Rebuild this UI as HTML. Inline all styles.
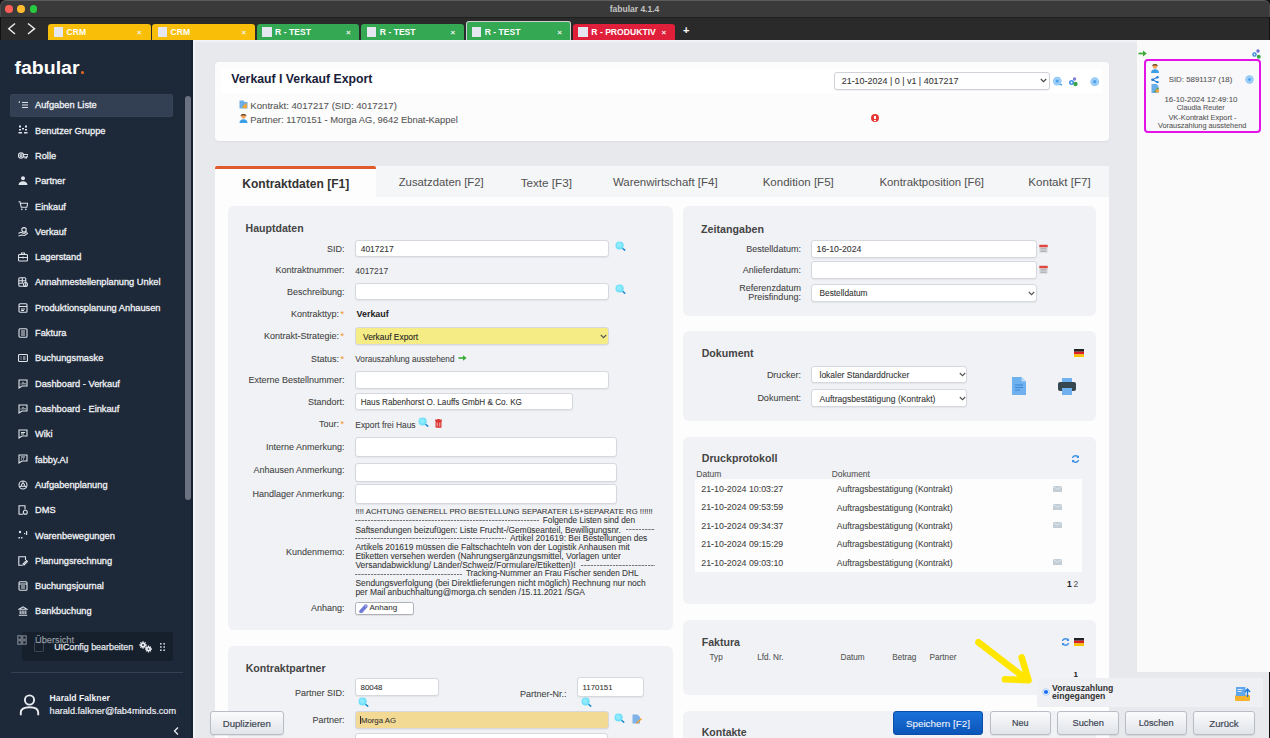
<!DOCTYPE html>
<html><head><meta charset="utf-8">
<style>
*{box-sizing:border-box;margin:0;padding:0}
body{width:1270px;height:738px;overflow:hidden;position:relative;background:#e8e9ed;font-family:"Liberation Sans",sans-serif}
.a{position:absolute}
.t{position:absolute;line-height:1;white-space:pre}
.inp{position:absolute;background:#fff;border:1px solid #d6d8de;border-radius:3px;box-shadow:0 1px 1px rgba(0,0,0,0.05)}
.panel{position:absolute;background:#f1f2f6;border-radius:6px}
.btn{position:absolute;border:1px solid #b9bdc6;border-radius:3px;background:linear-gradient(#fbfbfc,#e2e4e9)}
</style></head><body>
<div class="a" style="left:0px;top:0px;width:1270.00px;height:40.00px;background:#111"></div>
<div class="a" style="left:0px;top:0px;width:1270.00px;height:17.00px;background:#3a3a3a;border-radius:6px 6px 0 0;border-top:1px solid #5c5c5c;border-left:1px solid #4a4a4a;border-right:1px solid #4a4a4a"></div>
<div class="a" style="left:0px;top:17px;width:1270.00px;height:1.00px;background:#1f1f1f"></div>
<div class="a" style="left:0px;top:18px;width:1270.00px;height:22.00px;background:#2a2a2a"></div>
<div class="a" style="left:0px;top:17px;width:1.00px;height:721.00px;background:#111"></div>
<div class="a" style="left:1269px;top:17px;width:1.00px;height:721.00px;background:#111"></div>
<div class="a" style="left:5px;top:5px;width:7.6px;height:7.6px;border-radius:50%;background:#fe5f57"></div>
<div class="a" style="left:17px;top:5px;width:7.6px;height:7.6px;border-radius:50%;background:#febc2e"></div>
<div class="a" style="left:29.5px;top:5px;width:7.6px;height:7.6px;border-radius:50%;background:#28c840"></div>
<div class="t" style="left:609.70px;top:5.11px;font-size:8.50px;color:#c4c4c4;font-weight:bold;">fabular 4.1.4</div>
<svg class="a" style="left:0;top:17px" width="40" height="23" viewBox="0 0 40 23"><path d="M15 6.5L8.8 11.7l6.2 5.3M28 6.5l6.5 5.2-6.5 5.3" stroke="#ececec" stroke-width="1.5" fill="none"/></svg>
<div class="a" style="left:48px;top:23.5px;width:102.50px;height:16.50px;background:#f8be08;border-radius:3px 3px 0 0;"></div>
<div class="a" style="left:53.5px;top:27.3px;width:9.50px;height:9.50px;background:#e4e7ef"></div>
<div class="t" style="left:66.50px;top:28.02px;font-size:8.60px;color:#fff;font-weight:bold;">CRM</div>
<div class="t" style="left:137.00px;top:29.33px;font-size:8.00px;color:#f4f4f4;font-weight:bold;">×</div>
<div class="a" style="left:152px;top:23.5px;width:103.00px;height:16.50px;background:#f8be08;border-radius:3px 3px 0 0;"></div>
<div class="a" style="left:157.5px;top:27.3px;width:9.50px;height:9.50px;background:#e4e7ef"></div>
<div class="t" style="left:170.50px;top:28.02px;font-size:8.60px;color:#fff;font-weight:bold;">CRM</div>
<div class="t" style="left:241.50px;top:29.33px;font-size:8.00px;color:#f4f4f4;font-weight:bold;">×</div>
<div class="a" style="left:256.6px;top:23.5px;width:102.90px;height:16.50px;background:#34a853;border-radius:3px 3px 0 0;"></div>
<div class="a" style="left:262.1px;top:27.3px;width:9.50px;height:9.50px;background:#e4e7ef"></div>
<div class="t" style="left:275.10px;top:28.02px;font-size:8.60px;color:#fff;font-weight:bold;">R - TEST</div>
<div class="t" style="left:346.00px;top:29.33px;font-size:8.00px;color:#f4f4f4;font-weight:bold;">×</div>
<div class="a" style="left:361.3px;top:23.5px;width:102.70px;height:16.50px;background:#34a853;border-radius:3px 3px 0 0;"></div>
<div class="a" style="left:366.8px;top:27.3px;width:9.50px;height:9.50px;background:#e4e7ef"></div>
<div class="t" style="left:379.80px;top:28.02px;font-size:8.60px;color:#fff;font-weight:bold;">R - TEST</div>
<div class="t" style="left:450.50px;top:29.33px;font-size:8.00px;color:#f4f4f4;font-weight:bold;">×</div>
<div class="a" style="left:466.2px;top:21px;width:104.60px;height:19.00px;background:#34a853;border-radius:3px 3px 0 0;border:1.5px solid #d0d0d0;border-bottom:none;"></div>
<div class="a" style="left:471.7px;top:27.3px;width:9.50px;height:9.50px;background:#e4e7ef"></div>
<div class="t" style="left:484.70px;top:28.02px;font-size:8.60px;color:#fff;font-weight:bold;">R - TEST</div>
<div class="t" style="left:557.30px;top:29.33px;font-size:8.00px;color:#f4f4f4;font-weight:bold;">×</div>
<div class="a" style="left:572.8px;top:23.5px;width:102.20px;height:16.50px;background:#e0203a;border-radius:3px 3px 0 0;"></div>
<div class="a" style="left:578.3px;top:27.3px;width:9.50px;height:9.50px;background:#e4e7ef"></div>
<div class="t" style="left:591.30px;top:28.02px;font-size:8.60px;color:#fff;font-weight:bold;">R - PRODUKTIV</div>
<div class="t" style="left:661.50px;top:29.33px;font-size:8.00px;color:#f4f4f4;font-weight:bold;">×</div>
<div class="t" style="left:683.00px;top:25.19px;font-size:11.00px;color:#fff;font-weight:bold;">+</div>
<div class="a" style="left:0px;top:40px;width:193.00px;height:698.00px;background:#1d2838"></div>
<div class="t" style="left:14.50px;top:57.90px;font-size:19.50px;color:#fff;font-weight:bold;transform:scaleY(0.96);transform-origin:0 80%">fabular</div>
<div class="a" style="left:80.5px;top:71px;width:3.00px;height:3.20px;background:#f26522;border-radius:50%"></div>
<div class="a" style="left:10px;top:94px;width:163.00px;height:22.70px;background:#333f53;border-radius:3px;box-shadow:inset 0 0 0 0.5px #3b475a"></div>
<div class="a" style="left:185px;top:96px;width:6.00px;height:404.00px;background:#6b7280;border-radius:3px"></div>
<div class="a" style="left:191px;top:40px;width:2.00px;height:698.00px;background:#172030"></div>
<div class="a" style="left:193px;top:40px;width:2.00px;height:698.00px;background:#f2f3f6"></div>
<div class="t" style="left:35.00px;top:101.27px;font-size:9.25px;color:#f0f2f5;-webkit-text-stroke:0.3px #f0f2f5">Aufgaben Liste</div>
<svg class="a" style="left:18px;top:100.1px" width="10" height="10" viewBox="0 0 10 10"><path d="M4 2.5h6M4 5h6M4 7.5h6" stroke="#dfe3ea" stroke-width="1.1" fill="none"/><path d="M0.8 2.5l1-1" stroke="#dfe3ea" stroke-width="1.1" fill="none"/></svg>
<div class="t" style="left:35.00px;top:126.58px;font-size:9.25px;color:#f0f2f5;-webkit-text-stroke:0.3px #f0f2f5">Benutzer Gruppe</div>
<svg class="a" style="left:18px;top:125.4px" width="10" height="10" viewBox="0 0 10 10"><g fill="#dfe3ea"><rect x="1" y="0.5" width="2" height="2"/><rect x="7" y="0.5" width="2" height="2"/><rect x="1" y="4" width="2" height="1.5"/><rect x="7" y="4" width="2" height="1.5"/><rect x="4" y="3" width="2" height="1.5"/><rect x="0.5" y="7" width="3.5" height="1.5"/><rect x="6" y="7" width="3.5" height="1.5"/></g></svg>
<div class="t" style="left:35.00px;top:151.89px;font-size:9.25px;color:#f0f2f5;-webkit-text-stroke:0.3px #f0f2f5">Rolle</div>
<svg class="a" style="left:18px;top:150.7px" width="10" height="10" viewBox="0 0 10 10"><circle cx="3" cy="4.5" r="2.6" stroke="#dfe3ea" stroke-width="1.1" fill="none"/><circle cx="3" cy="4.5" r="1" stroke="#dfe3ea" stroke-width="1.1" fill="none"/><path d="M5.6 3.5h4.4v2.2h-1.5v1.3h-1.5v-1.3h-1.4" stroke="#dfe3ea" stroke-width="1.1" fill="none"/></svg>
<div class="t" style="left:35.00px;top:177.20px;font-size:9.25px;color:#f0f2f5;-webkit-text-stroke:0.3px #f0f2f5">Partner</div>
<svg class="a" style="left:18px;top:176.0px" width="10" height="10" viewBox="0 0 10 10"><g fill="#dfe3ea"><circle cx="5" cy="2.3" r="2"/><path d="M0.5 9c0-2.5 2-3.8 4.5-3.8s4.5 1.3 4.5 3.8z"/></g></svg>
<div class="t" style="left:35.00px;top:202.51px;font-size:9.25px;color:#f0f2f5;-webkit-text-stroke:0.3px #f0f2f5">Einkauf</div>
<svg class="a" style="left:18px;top:201.3px" width="10" height="10" viewBox="0 0 10 10"><path d="M0.5 0.8h1.5l1.3 5.5h5.5l1-4h-7" stroke="#dfe3ea" stroke-width="1.1" fill="none"/><circle cx="3.8" cy="8.4" r="0.8" fill="#dfe3ea"/><circle cx="7.8" cy="8.4" r="0.8" fill="#dfe3ea"/></svg>
<div class="t" style="left:35.00px;top:227.82px;font-size:9.25px;color:#f0f2f5;-webkit-text-stroke:0.3px #f0f2f5">Verkauf</div>
<svg class="a" style="left:18px;top:226.6px" width="10" height="10" viewBox="0 0 10 10"><circle cx="6" cy="2.8" r="2.2" stroke="#dfe3ea" stroke-width="1.1" fill="none"/><path d="M0.5 6.5l2-1.2 3.5 1 3-1.5M0.5 9l3-1 3 .5 3.5-2.5" stroke="#dfe3ea" stroke-width="1.1" fill="none"/></svg>
<div class="t" style="left:35.00px;top:253.13px;font-size:9.25px;color:#f0f2f5;-webkit-text-stroke:0.3px #f0f2f5">Lagerstand</div>
<svg class="a" style="left:18px;top:252.0px" width="10" height="10" viewBox="0 0 10 10"><rect x="0.5" y="2.5" width="9" height="6.5" rx="1" stroke="#dfe3ea" stroke-width="1.1" fill="none"/><path d="M3.5 2.5v-1.5h3v1.5M0.5 5.5h9M5 4.5v2" stroke="#dfe3ea" stroke-width="1.1" fill="none"/></svg>
<div class="t" style="left:35.00px;top:278.44px;font-size:9.25px;color:#f0f2f5;-webkit-text-stroke:0.3px #f0f2f5">Annahmestellenplanung Unkel</div>
<svg class="a" style="left:18px;top:277.3px" width="10" height="10" viewBox="0 0 10 10"><rect x="0.8" y="0.8" width="7" height="8.4" rx="1" stroke="#dfe3ea" stroke-width="1.1" fill="none"/><path d="M0.8 3.8h7M0.8 6.3h4M4.3 .8v5.5" stroke="#dfe3ea" stroke-width="1.1" fill="none"/><circle cx="7.5" cy="7.5" r="2" stroke="#dfe3ea" stroke-width="1.1" fill="none"/></svg>
<div class="t" style="left:35.00px;top:303.75px;font-size:9.25px;color:#f0f2f5;-webkit-text-stroke:0.3px #f0f2f5">Produktionsplanung Anhausen</div>
<svg class="a" style="left:18px;top:302.6px" width="10" height="10" viewBox="0 0 10 10"><rect x="1" y="0.8" width="8" height="8.4" rx="1" stroke="#dfe3ea" stroke-width="1.1" fill="none"/><path d="M1 3.5h8M3 6h4M3 7.5h3" stroke="#dfe3ea" stroke-width="1.1" fill="none"/></svg>
<div class="t" style="left:35.00px;top:329.06px;font-size:9.25px;color:#f0f2f5;-webkit-text-stroke:0.3px #f0f2f5">Faktura</div>
<svg class="a" style="left:18px;top:327.9px" width="10" height="10" viewBox="0 0 10 10"><rect x="1" y="0.8" width="8" height="8.4" rx="1" stroke="#dfe3ea" stroke-width="1.1" fill="none"/><path d="M3 3h4M3 5h4M3 7h4" stroke="#dfe3ea" stroke-width="1.1" fill="none"/></svg>
<div class="t" style="left:35.00px;top:354.37px;font-size:9.25px;color:#f0f2f5;-webkit-text-stroke:0.3px #f0f2f5">Buchungsmaske</div>
<svg class="a" style="left:18px;top:353.2px" width="10" height="10" viewBox="0 0 10 10"><rect x="0.5" y="1.5" width="9" height="7" rx="1" stroke="#dfe3ea" stroke-width="1.1" fill="none"/><path d="M2.5 4h1M2.5 6h1M5 4h2.5M5 6h2.5" stroke="#dfe3ea" stroke-width="1.1" fill="none"/></svg>
<div class="t" style="left:35.00px;top:379.68px;font-size:9.25px;color:#f0f2f5;-webkit-text-stroke:0.3px #f0f2f5">Dashboard - Verkauf</div>
<svg class="a" style="left:18px;top:378.5px" width="10" height="10" viewBox="0 0 10 10"><path d="M1 1h8v6h-5l-3 2z" stroke="#dfe3ea" stroke-width="1.1" fill="none"/><path d="M3 5.5v-1M5 5.5v-2.5M7 5.5v-1.5" stroke="#dfe3ea" stroke-width="1.1" fill="none"/></svg>
<div class="t" style="left:35.00px;top:404.99px;font-size:9.25px;color:#f0f2f5;-webkit-text-stroke:0.3px #f0f2f5">Dashboard - Einkauf</div>
<svg class="a" style="left:18px;top:403.8px" width="10" height="10" viewBox="0 0 10 10"><path d="M1 1h8v6h-5l-3 2z" stroke="#dfe3ea" stroke-width="1.1" fill="none"/><path d="M3 5.5v-1M5 5.5v-2.5M7 5.5v-1.5" stroke="#dfe3ea" stroke-width="1.1" fill="none"/></svg>
<div class="t" style="left:35.00px;top:430.30px;font-size:9.25px;color:#f0f2f5;-webkit-text-stroke:0.3px #f0f2f5">Wiki</div>
<svg class="a" style="left:18px;top:429.1px" width="10" height="10" viewBox="0 0 10 10"><path d="M1 1h8v6h-5l-3 2z" stroke="#dfe3ea" stroke-width="1.1" fill="none"/><path d="M3 3.5h4M3 5h3" stroke="#dfe3ea" stroke-width="1.1" fill="none"/></svg>
<div class="t" style="left:35.00px;top:455.61px;font-size:9.25px;color:#f0f2f5;-webkit-text-stroke:0.3px #f0f2f5">fabby.AI</div>
<svg class="a" style="left:18px;top:454.4px" width="10" height="10" viewBox="0 0 10 10"><path d="M1 1h8v6h-5l-3 2z" stroke="#dfe3ea" stroke-width="1.1" fill="none"/><path d="M3 5h1M5 5h1M3 3h4" stroke="#dfe3ea" stroke-width="1.1" fill="none"/></svg>
<div class="t" style="left:35.00px;top:480.92px;font-size:9.25px;color:#f0f2f5;-webkit-text-stroke:0.3px #f0f2f5">Aufgabenplanung</div>
<svg class="a" style="left:18px;top:479.8px" width="10" height="10" viewBox="0 0 10 10"><circle cx="5" cy="5" r="4" stroke="#dfe3ea" stroke-width="1.1" fill="none"/><circle cx="5" cy="5" r="1.5" stroke="#dfe3ea" stroke-width="1.1" fill="none"/><path d="M5 1v2.5M1.5 7l2.3-1.2M8.5 7l-2.3-1.2" stroke="#dfe3ea" stroke-width="1.1" fill="none"/></svg>
<div class="t" style="left:35.00px;top:506.23px;font-size:9.25px;color:#f0f2f5;-webkit-text-stroke:0.3px #f0f2f5">DMS</div>
<svg class="a" style="left:18px;top:505.1px" width="10" height="10" viewBox="0 0 10 10"><path d="M7 4.5v-3.7h-6v8.4h4" stroke="#dfe3ea" stroke-width="1.1" fill="none"/><circle cx="7.3" cy="7.3" r="2" stroke="#dfe3ea" stroke-width="1.1" fill="none"/></svg>
<div class="t" style="left:35.00px;top:531.54px;font-size:9.25px;color:#f0f2f5;-webkit-text-stroke:0.3px #f0f2f5">Warenbewegungen</div>
<svg class="a" style="left:18px;top:530.4px" width="10" height="10" viewBox="0 0 10 10"><g fill="#dfe3ea"><circle cx="2" cy="2" r="1.2"/><rect x="0.5" y="7" width="1.5" height="1.5"/><rect x="3" y="7" width="1.5" height="1.5"/><rect x="8" y="1" width="1.2" height="4"/><rect x="6" y="3" width="1.2" height="1.2"/></g></svg>
<div class="t" style="left:35.00px;top:556.85px;font-size:9.25px;color:#f0f2f5;-webkit-text-stroke:0.3px #f0f2f5">Planungsrechnung</div>
<svg class="a" style="left:18px;top:555.7px" width="10" height="10" viewBox="0 0 10 10"><path d="M7.5 4v-3.2h-6.7v8.4h4" stroke="#dfe3ea" stroke-width="1.1" fill="none"/><path d="M6 9l3.5-3.5-1-1-3.5 3.5z" stroke="#dfe3ea" stroke-width="1.1" fill="none"/></svg>
<div class="t" style="left:35.00px;top:582.16px;font-size:9.25px;color:#f0f2f5;-webkit-text-stroke:0.3px #f0f2f5">Buchungsjournal</div>
<svg class="a" style="left:18px;top:581.0px" width="10" height="10" viewBox="0 0 10 10"><rect x="1" y="0.8" width="8" height="8.4" rx="1" stroke="#dfe3ea" stroke-width="1.1" fill="none"/><path d="M1 3h8M3 5h4M3 7h4" stroke="#dfe3ea" stroke-width="1.1" fill="none"/></svg>
<div class="t" style="left:35.00px;top:607.47px;font-size:9.25px;color:#f0f2f5;-webkit-text-stroke:0.3px #f0f2f5">Bankbuchung</div>
<svg class="a" style="left:18px;top:606.3px" width="10" height="10" viewBox="0 0 10 10"><path d="M1 3.2L5 0.8l4 2.4zM0.8 9.2h8.4M2.2 4.5v3.6M4.1 4.5v3.6M5.9 4.5v3.6M7.8 4.5v3.6" stroke="#dfe3ea" stroke-width="1.1" fill="none"/></svg>
<div class="a" style="left:21.5px;top:631.5px;width:151.50px;height:29.20px;background:rgba(22,30,43,0.92);border-radius:3px"></div>
<svg class="a" style="left:17px;top:635px" width="10" height="10" viewBox="0 0 10 10"><g stroke="rgba(223,227,234,0.5)" stroke-width="1.1" fill="none"><rect x="0.8" y="0.8" width="3.5" height="3.5"/><rect x="5.7" y="0.8" width="3.5" height="3.5"/><rect x="0.8" y="5.7" width="3.5" height="3.5"/><rect x="5.7" y="5.7" width="3.5" height="3.5"/></g></svg>
<div class="a" style="left:34px;top:641.5px;width:9.50px;height:10.00px;border:1px solid #3c4250;border-radius:1px"></div>
<div class="t" style="left:35.00px;top:636.17px;font-size:9.25px;color:rgba(205,210,218,0.62);-webkit-text-stroke:0.25px rgba(205,210,218,0.55)">Übersicht</div>
<div class="t" style="left:54.20px;top:642.78px;font-size:8.88px;color:#e4e7ec;-webkit-text-stroke:0.25px #e4e7ec">UIConfig bearbeiten</div>
<svg class="a" style="left:139px;top:641px" width="14" height="12" viewBox="0 0 14 12"><g stroke="#e9ecf1" stroke-width="1.3"><path d="M4 0.3v7.4M0.3 4h7.4M1.4 1.4l5.2 5.2M6.6 1.4L1.4 6.6"/><path d="M9.5 4.6v6.8M6.1 8h6.8M7.1 5.6l4.8 4.8M11.9 5.6l-4.8 4.8"/></g><g fill="#e9ecf1"><circle cx="4" cy="4" r="2.6"/><circle cx="9.5" cy="8" r="2.4"/></g><g fill="#161e2b"><circle cx="4" cy="4" r="0.9"/><circle cx="9.5" cy="8" r="0.8"/></g></svg>
<svg class="a" style="left:159px;top:642px" width="7" height="10" viewBox="0 0 7 10"><g fill="#c9ced8"><rect x="1" y="1" width="1.6" height="1.6"/><rect x="4.4" y="1" width="1.6" height="1.6"/><rect x="1" y="4.2" width="1.6" height="1.6"/><rect x="4.4" y="4.2" width="1.6" height="1.6"/><rect x="1" y="7.4" width="1.6" height="1.6"/><rect x="4.4" y="7.4" width="1.6" height="1.6"/></g></svg>
<div class="a" style="left:11px;top:671.5px;width:172.00px;height:1.00px;background:#334155"></div>
<svg class="a" style="left:19px;top:693px" width="21" height="23" viewBox="0 0 21 23"><circle cx="10.5" cy="7" r="4.6" stroke="#e9ecf1" stroke-width="1.9" fill="none"/><path d="M1.8 22.2v-2.7c0-3.3 3-5.3 8.7-5.3s8.7 2 8.7 5.3v2.7" stroke="#e9ecf1" stroke-width="1.9" fill="none"/></svg>
<div class="t" style="left:49.60px;top:694.14px;font-size:8.69px;color:#f1f3f6;font-weight:bold;">Harald Falkner</div>
<div class="t" style="left:49.60px;top:707.05px;font-size:9.15px;color:#e9ecf1;-webkit-text-stroke:0.2px #e9ecf1">harald.falkner@fab4minds.com</div>
<svg class="a" style="left:172px;top:726px" width="9" height="10" viewBox="0 0 9 10"><path d="M6 1.5L2.5 5 6 8.5" stroke="#e9ecf1" stroke-width="1.3" fill="none"/></svg>
<div class="a" style="left:193px;top:40px;width:944.00px;height:1.50px;background:#eff2f6"></div>
<div class="a" style="left:1137px;top:40px;width:133.00px;height:632.30px;background:#fafafa"></div>
<div class="a" style="left:215px;top:62px;width:893.50px;height:79.00px;background:#fcfcfd;border-radius:4px;box-shadow:0 1px 2px rgba(0,0,0,0.05)"></div>
<div class="a" style="left:221px;top:68.7px;width:881.00px;height:24.10px;background:#fff"></div>
<div class="t" style="left:231.30px;top:73.00px;font-size:12.28px;color:#18213a;font-weight:bold;">Verkauf I Verkauf Export</div>
<svg class="a" style="left:238.5px;top:99.5px" width="9" height="9" viewBox="0 0 9 9"><path d="M0.5 0.5h4l1.2 1.5h2.8v6.5h-8z" fill="#6aaee8"/><path d="M3 7l4-4 1.2 1.2-4 4z" fill="#f0a030"/><circle cx="6.5" cy="6.8" r="1.8" fill="#f5a742"/></svg>
<div class="t" style="left:250.30px;top:100.63px;font-size:9.65px;color:#555;-webkit-text-stroke:0.08px currentColor;">Kontrakt: 4017217 (SID: 4017217)</div>
<svg class="a" style="left:238.5px;top:113.5px" width="9" height="9" viewBox="0 0 9 9"><circle cx="4.5" cy="2.6" r="2.2" fill="#f0a860"/><path d="M1.5 2.6c0-2 1.2-2.5 3-2.5s3 .5 3 2.5c-.8-.8-1.5-1-3-1s-2.2.2-3 1z" fill="#7a4a20"/><path d="M0.5 9c0-2.6 1.6-3.8 4-3.8s4 1.2 4 3.8z" fill="#3a9ee8"/></svg>
<div class="t" style="left:250.30px;top:115.57px;font-size:9.37px;color:#555;-webkit-text-stroke:0.08px currentColor;">Partner: 1170151 - Morga AG, 9642 Ebnat-Kappel</div>
<div class="a" style="left:834.2px;top:71.5px;width:215.40px;height:18.20px;background:#fff;border:1px solid #cfd2d8;border-radius:3px;box-shadow:0 1px 1px rgba(0,0,0,0.06)"></div>
<div class="t" style="left:841.70px;top:77.22px;font-size:8.95px;color:#333;-webkit-text-stroke:0.08px currentColor;">21-10-2024 | 0 | v1 | 4017217</div>
<svg class="a" style="left:1040px;top:78px" width="7" height="5" viewBox="0 0 7 5"><path d="M0.8 1l2.7 2.7L6.2 1" stroke="#444" stroke-width="1.1" fill="none"/></svg>
<svg class="a" style="left:1052px;top:76px" width="11" height="11" viewBox="0 0 11 11"><path d="M7 7.5l2.5 1.3" stroke="#3a8ee8" stroke-width="1.4" stroke-linecap="round"/><circle cx="5.3" cy="5.1" r="4.3" fill="#8cc6f6"/><circle cx="5.3" cy="5.1" r="2.8" fill="none" stroke="#b9dcfa" stroke-width="0.6"/><circle cx="5.3" cy="5.1" r="1.3" fill="#4a9be8"/></svg>
<svg class="a" style="left:1068px;top:77px" width="10" height="10" viewBox="0 0 10 10"><circle cx="6.5" cy="2" r="1.7" fill="#7a7fd8"/><circle cx="3.5" cy="5.5" r="2.5" fill="#3d93ec"/><circle cx="3.5" cy="5.5" r="0.9" fill="#fff"/><circle cx="7.5" cy="7" r="2.2" fill="#3aa84a"/></svg>
<svg class="a" style="left:1090px;top:76.5px" width="9.5" height="9.5" viewBox="0 0 9.5 9.5"><circle cx="4.75" cy="4.75" r="4.4" fill="#8cc6f6"/><circle cx="4.75" cy="4.75" r="2.9" fill="none" stroke="#b9dcfa" stroke-width="0.6"/><circle cx="4.75" cy="4.75" r="1.4" fill="#4a9be8"/></svg>
<div class="a" style="left:870.8px;top:113.8px;width:8.4px;height:8.4px;border-radius:50%;background:#e53935"></div>
<div class="a" style="left:874.3px;top:115.5px;width:1.40px;height:3.70px;background:#fff"></div>
<div class="a" style="left:874.3px;top:119.9px;width:1.40px;height:1.00px;background:#fff"></div>
<div class="a" style="left:215px;top:166px;width:893.50px;height:31.00px;background:#f5f6f8"></div>
<div class="a" style="left:215px;top:166px;width:161.30px;height:31.00px;background:#fdfdfd"></div>
<div class="a" style="left:215px;top:165.6px;width:161.30px;height:3.20px;background:#e05a2b;border-radius:2px 2px 0 0"></div>
<div class="t" style="left:242.30px;top:177.91px;font-size:12.04px;color:#333;font-weight:bold;">Kontraktdaten [F1]</div>
<div class="t" style="left:398.70px;top:177.30px;font-size:11.34px;color:#505050;">Zusatzdaten [F2]</div>
<div class="t" style="left:520.70px;top:177.01px;font-size:11.68px;color:#505050;">Texte [F3]</div>
<div class="t" style="left:612.90px;top:177.19px;font-size:11.47px;color:#505050;">Warenwirtschaft [F4]</div>
<div class="t" style="left:762.70px;top:177.15px;font-size:11.52px;color:#505050;">Kondition [F5]</div>
<div class="t" style="left:879.40px;top:177.24px;font-size:11.42px;color:#505050;">Kontraktposition [F6]</div>
<div class="t" style="left:1028.30px;top:177.09px;font-size:11.59px;color:#505050;">Kontakt [F7]</div>
<div class="a" style="left:215px;top:197px;width:893.50px;height:541.00px;background:#fdfdfd"></div>
<div class="a" style="left:227.5px;top:206px;width:445.50px;height:424.00px;background:#f1f2f6;border-radius:6px"></div>
<div class="a" style="left:227.5px;top:646.2px;width:445.50px;height:113.80px;background:#f1f2f6;border-radius:6px"></div>
<div class="a" style="left:683.4px;top:206.1px;width:412.40px;height:110.10px;background:#f1f2f6;border-radius:6px"></div>
<div class="a" style="left:683.4px;top:331.1px;width:412.40px;height:89.70px;background:#f1f2f6;border-radius:6px"></div>
<div class="a" style="left:683.4px;top:436.7px;width:412.40px;height:167.50px;background:#f1f2f6;border-radius:6px"></div>
<div class="a" style="left:683.4px;top:620.2px;width:412.40px;height:74.50px;background:#f1f2f6;border-radius:6px"></div>
<div class="a" style="left:683.4px;top:710.6px;width:412.40px;height:49.40px;background:#f1f2f6;border-radius:6px"></div>
<div class="t" style="left:245.60px;top:223.36px;font-size:10.56px;color:#444;font-weight:bold;">Hauptdaten</div>
<div class="a" style="left:355.3px;top:239.7px;width:253.40px;height:17.70px;background:#fff;border:1px solid #d5d8de;border-radius:3px;box-shadow:0 1px 1.5px rgba(0,0,0,0.06)"></div>
<div class="t" style="left:327.10px;top:244.88px;font-size:9.00px;color:#444;-webkit-text-stroke:0.08px currentColor;">SID:</div>
<div class="t" style="left:360.70px;top:244.82px;font-size:8.48px;color:#333;-webkit-text-stroke:0.08px currentColor;">4017217</div>
<svg class="a" style="left:614.5px;top:240.8px" width="11" height="11" viewBox="0 0 11 11"><path d="M6.5 6.5l3.3 2.6" stroke="#1a86d0" stroke-width="1.5" stroke-linecap="round"/><circle cx="4.6" cy="4.5" r="4.1" fill="#6fe0f8"/><circle cx="4.2" cy="4" r="2.6" fill="#9af0ff" opacity="0.7"/></svg>
<div class="t" style="left:275.57px;top:266.48px;font-size:9.00px;color:#444;-webkit-text-stroke:0.08px currentColor;">Kontraktnummer:</div>
<div class="t" style="left:355.30px;top:266.77px;font-size:8.43px;color:#444;-webkit-text-stroke:0.08px currentColor;">4017217</div>
<div class="a" style="left:355.3px;top:283.3px;width:253.40px;height:17.10px;background:#fff;border:1px solid #d5d8de;border-radius:3px;box-shadow:0 1px 1.5px rgba(0,0,0,0.06)"></div>
<div class="t" style="left:287.06px;top:288.18px;font-size:9.00px;color:#444;-webkit-text-stroke:0.08px currentColor;">Beschreibung:</div>
<svg class="a" style="left:614.5px;top:284.3px" width="11" height="11" viewBox="0 0 11 11"><path d="M6.5 6.5l3.3 2.6" stroke="#1a86d0" stroke-width="1.5" stroke-linecap="round"/><circle cx="4.6" cy="4.5" r="4.1" fill="#6fe0f8"/><circle cx="4.2" cy="4" r="2.6" fill="#9af0ff" opacity="0.7"/></svg>
<div class="t" style="left:291.08px;top:310.08px;font-size:9.00px;color:#444;-webkit-text-stroke:0.08px currentColor;">Kontrakttyp:</div>
<div class="t" style="left:340.60px;top:310.08px;font-size:9.00px;color:#f39c33;-webkit-text-stroke:0.08px currentColor;">*</div>
<div class="t" style="left:356.50px;top:309.93px;font-size:8.94px;color:#222;font-weight:bold;">Verkauf</div>
<div class="a" style="left:355.3px;top:326.8px;width:253.40px;height:18.20px;background:#f5ec85;border:1px solid #d5d8de;border-radius:3px;box-shadow:0 1px 1.5px rgba(0,0,0,0.06)"></div>
<div class="t" style="left:264.06px;top:332.48px;font-size:9.00px;color:#444;-webkit-text-stroke:0.08px currentColor;">Kontrakt-Strategie:</div>
<div class="t" style="left:340.60px;top:332.48px;font-size:9.00px;color:#f39c33;-webkit-text-stroke:0.08px currentColor;">*</div>
<div class="t" style="left:363.00px;top:332.58px;font-size:8.42px;color:#222;-webkit-text-stroke:0.08px currentColor;">Verkauf Export</div>
<svg class="a" style="left:600px;top:334px" width="7" height="5" viewBox="0 0 7 5"><path d="M0.8 1l2.7 2.7L6.2 1" stroke="#555" stroke-width="1.1" fill="none"/></svg>
<div class="t" style="left:311.08px;top:355.28px;font-size:9.00px;color:#444;-webkit-text-stroke:0.08px currentColor;">Status:</div>
<div class="t" style="left:340.60px;top:355.28px;font-size:9.00px;color:#f39c33;-webkit-text-stroke:0.08px currentColor;">*</div>
<div class="t" style="left:355.30px;top:356.13px;font-size:8.23px;color:#444;-webkit-text-stroke:0.08px currentColor;">Vorauszahlung ausstehend</div>
<svg class="a" style="left:457.5px;top:354.5px" width="9" height="6" viewBox="0 0 9 6"><path d="M0.5 3h6" stroke="#3aaa35" stroke-width="1.6"/><path d="M5 0.3L8.6 3 5 5.7z" fill="#3aaa35"/></svg>
<div class="a" style="left:355.3px;top:371px;width:253.40px;height:18.00px;background:#fff;border:1px solid #d5d8de;border-radius:3px;box-shadow:0 1px 1.5px rgba(0,0,0,0.06)"></div>
<div class="t" style="left:248.56px;top:376.48px;font-size:9.00px;color:#444;-webkit-text-stroke:0.08px currentColor;">Externe Bestellnummer:</div>
<div class="a" style="left:355.3px;top:393.1px;width:217.50px;height:17.10px;background:#fff;border:1px solid #d5d8de;border-radius:3px;box-shadow:0 1px 1.5px rgba(0,0,0,0.06)"></div>
<div class="t" style="left:308.08px;top:397.88px;font-size:9.00px;color:#444;-webkit-text-stroke:0.08px currentColor;">Standort:</div>
<div class="t" style="left:360.70px;top:398.58px;font-size:8.17px;color:#333;-webkit-text-stroke:0.08px currentColor;">Haus Rabenhorst O. Lauffs GmbH &amp; Co. KG</div>
<div class="t" style="left:319.09px;top:419.68px;font-size:9.00px;color:#444;-webkit-text-stroke:0.08px currentColor;">Tour:</div>
<div class="t" style="left:340.60px;top:419.68px;font-size:9.00px;color:#f39c33;-webkit-text-stroke:0.08px currentColor;">*</div>
<div class="t" style="left:355.30px;top:420.58px;font-size:8.41px;color:#444;-webkit-text-stroke:0.08px currentColor;">Export frei Haus</div>
<svg class="a" style="left:417.5px;top:417.3px" width="11" height="11" viewBox="0 0 11 11"><path d="M6.5 6.5l3.3 2.6" stroke="#1a86d0" stroke-width="1.5" stroke-linecap="round"/><circle cx="4.6" cy="4.5" r="4.1" fill="#6fe0f8"/><circle cx="4.2" cy="4" r="2.6" fill="#9af0ff" opacity="0.7"/></svg>
<svg class="a" style="left:435.3px;top:418.5px" width="7" height="9" viewBox="0 0 7 9"><rect x="0.5" y="1.8" width="6" height="7" rx="0.8" fill="#d9302c"/><rect x="0" y="0.6" width="7" height="1.3" fill="#d9302c"/><rect x="2.3" y="0" width="2.4" height="1" fill="#d9302c"/><path d="M2.2 3.5v4M4.8 3.5v4" stroke="#fff" stroke-width="0.7"/></svg>
<div class="a" style="left:355.3px;top:436.7px;width:261.40px;height:20.00px;background:#fff;border:1px solid #d5d8de;border-radius:3px;box-shadow:0 1px 1.5px rgba(0,0,0,0.06)"></div>
<div class="t" style="left:266.05px;top:442.88px;font-size:9.00px;color:#444;-webkit-text-stroke:0.08px currentColor;">Interne Anmerkung:</div>
<div class="a" style="left:355.3px;top:462.5px;width:261.40px;height:19.30px;background:#fff;border:1px solid #d5d8de;border-radius:3px;box-shadow:0 1px 1.5px rgba(0,0,0,0.06)"></div>
<div class="t" style="left:253.54px;top:466.48px;font-size:9.00px;color:#444;-webkit-text-stroke:0.08px currentColor;">Anhausen Anmerkung:</div>
<div class="a" style="left:355.3px;top:484px;width:261.40px;height:19.50px;background:#fff;border:1px solid #d5d8de;border-radius:3px;box-shadow:0 1px 1.5px rgba(0,0,0,0.06)"></div>
<div class="t" style="left:252.54px;top:489.98px;font-size:9.00px;color:#444;-webkit-text-stroke:0.08px currentColor;">Handlager Anmerkung:</div>
<div class="t" style="left:286.06px;top:547.88px;font-size:9.00px;color:#444;-webkit-text-stroke:0.08px currentColor;">Kundenmemo:</div>
<div class="t" style="left:355.40px;top:508.24px;font-size:7.75px;color:#383838;-webkit-text-stroke:0.08px currentColor;">!!!! ACHTUNG GENERELL PRO BESTELLUNG SEPARATER LS+SEPARATE RG !!!!!!</div>
<div class="a" style="left:355.4px;top:520px;width:183.80px;height:1.00px;background:linear-gradient(90deg,#777 0,#777 2.2px,transparent 2.2px) 0 0/3.2px 1px repeat-x"></div>
<div class="t" style="left:542.80px;top:516.73px;font-size:8.26px;color:#383838;-webkit-text-stroke:0.08px currentColor;">Folgende Listen sind den</div>
<div class="t" style="left:355.40px;top:525.53px;font-size:8.39px;color:#383838;-webkit-text-stroke:0.08px currentColor;">Saftsendungen beizufügen: Liste Frucht-/Gemüseanteil, Bewilligungsnr.</div>
<div class="a" style="left:625.8px;top:529px;width:28.80px;height:1.00px;background:linear-gradient(90deg,#777 0,#777 2.2px,transparent 2.2px) 0 0/3.2px 1px repeat-x"></div>
<div class="a" style="left:355.4px;top:538px;width:150.80px;height:1.00px;background:linear-gradient(90deg,#777 0,#777 2.2px,transparent 2.2px) 0 0/3.2px 1px repeat-x"></div>
<div class="t" style="left:509.90px;top:534.44px;font-size:8.41px;color:#383838;-webkit-text-stroke:0.08px currentColor;">Artikel 201619: Bei Bestellungen des</div>
<div class="t" style="left:355.40px;top:543.35px;font-size:8.42px;color:#383838;-webkit-text-stroke:0.08px currentColor;">Artikels 201619 müssen die Faltschachteln von der Logistik Anhausen mit</div>
<div class="t" style="left:355.40px;top:552.24px;font-size:8.45px;color:#383838;-webkit-text-stroke:0.08px currentColor;">Etiketten versehen werden (Nahrungsergänzungsmittel, Vorlagen unter</div>
<div class="t" style="left:355.40px;top:561.12px;font-size:8.51px;color:#383838;-webkit-text-stroke:0.08px currentColor;">Versandabwicklung/ Länder/Schweiz/Formulare/Etiketten)!</div>
<div class="a" style="left:580.7px;top:565px;width:73.90px;height:1.00px;background:linear-gradient(90deg,#777 0,#777 2.2px,transparent 2.2px) 0 0/3.2px 1px repeat-x"></div>
<div class="a" style="left:355.4px;top:574px;width:106.90px;height:1.00px;background:linear-gradient(90deg,#777 0,#777 2.2px,transparent 2.2px) 0 0/3.2px 1px repeat-x"></div>
<div class="t" style="left:465.90px;top:570.30px;font-size:8.20px;color:#383838;-webkit-text-stroke:0.08px currentColor;">Tracking-Nummer an Frau Fischer senden DHL</div>
<div class="t" style="left:355.40px;top:579.01px;font-size:8.45px;color:#383838;-webkit-text-stroke:0.08px currentColor;">Sendungsverfolgung (bei Direktlieferungen nicht möglich) Rechnung nur noch</div>
<div class="t" style="left:355.40px;top:587.96px;font-size:8.41px;color:#383838;-webkit-text-stroke:0.08px currentColor;">per Mail anbuchhaltung@morga.ch senden /15.11.2021 /SGA</div>
<div class="t" style="left:311.07px;top:603.88px;font-size:9.00px;color:#444;-webkit-text-stroke:0.08px currentColor;">Anhang:</div>
<div class="a" style="left:355.3px;top:601.5px;width:58.70px;height:13.00px;background:#fff;border:1px solid #aeb2b8;border-radius:2.5px;box-shadow:0 1px 1px rgba(0,0,0,0.08)"></div>
<svg class="a" style="left:359px;top:603.5px" width="9" height="9" viewBox="0 0 9 9"><path d="M2 7.5L6.8 2.2" stroke="#6f7bd6" stroke-width="3.6" stroke-linecap="round"/><circle cx="6.9" cy="2.1" r="0.6" fill="#fff"/></svg>
<div class="t" style="left:369.50px;top:604.20px;font-size:8.03px;color:#333;-webkit-text-stroke:0.08px currentColor;">Anhang</div>
<div class="t" style="left:245.70px;top:662.74px;font-size:10.59px;color:#444;font-weight:bold;">Kontraktpartner</div>
<div class="a" style="left:355.4px;top:677.7px;width:83.90px;height:18.50px;background:#fff;border:1px solid #d5d8de;border-radius:3px;box-shadow:0 1px 1.5px rgba(0,0,0,0.06)"></div>
<div class="t" style="left:295.08px;top:689.28px;font-size:9.00px;color:#444;-webkit-text-stroke:0.08px currentColor;">Partner SID:</div>
<div class="t" style="left:360.50px;top:683.80px;font-size:7.91px;color:#333;-webkit-text-stroke:0.08px currentColor;">80048</div>
<svg class="a" style="left:358px;top:697.3px" width="11" height="11" viewBox="0 0 11 11"><path d="M6.5 6.5l3.3 2.6" stroke="#1a86d0" stroke-width="1.5" stroke-linecap="round"/><circle cx="4.6" cy="4.5" r="4.1" fill="#6fe0f8"/><circle cx="4.2" cy="4" r="2.6" fill="#9af0ff" opacity="0.7"/></svg>
<div class="t" style="left:520.09px;top:689.88px;font-size:9.00px;color:#444;-webkit-text-stroke:0.08px currentColor;">Partner-Nr.:</div>
<div class="a" style="left:577.2px;top:677.4px;width:66.80px;height:19.60px;background:#fff;border:1px solid #d5d8de;border-radius:3px;box-shadow:0 1px 1.5px rgba(0,0,0,0.06)"></div>
<div class="t" style="left:582.50px;top:683.85px;font-size:7.86px;color:#333;-webkit-text-stroke:0.08px currentColor;">1170151</div>
<svg class="a" style="left:580.5px;top:697.3px" width="11" height="11" viewBox="0 0 11 11"><path d="M6.5 6.5l3.3 2.6" stroke="#1a86d0" stroke-width="1.5" stroke-linecap="round"/><circle cx="4.6" cy="4.5" r="4.1" fill="#6fe0f8"/><circle cx="4.2" cy="4" r="2.6" fill="#9af0ff" opacity="0.7"/></svg>
<div class="t" style="left:312.59px;top:716.28px;font-size:9.00px;color:#444;-webkit-text-stroke:0.08px currentColor;">Partner:</div>
<div class="a" style="left:355.4px;top:710.8px;width:253.20px;height:17.80px;background:#f3da94;border:1px solid #d5d8de;border-radius:3px;box-shadow:0 1px 1.5px rgba(0,0,0,0.06)"></div>
<div class="t" style="left:361.00px;top:716.92px;font-size:7.77px;color:#333;-webkit-text-stroke:0.08px currentColor;">Morga AG</div>
<div class="a" style="left:360px;top:715.5px;width:1.00px;height:8.00px;background:#333"></div>
<svg class="a" style="left:613.5px;top:712.5px" width="11" height="11" viewBox="0 0 11 11"><path d="M6.5 6.5l3.3 2.6" stroke="#1a86d0" stroke-width="1.5" stroke-linecap="round"/><circle cx="4.6" cy="4.5" r="4.1" fill="#6fe0f8"/><circle cx="4.2" cy="4" r="2.6" fill="#9af0ff" opacity="0.7"/></svg>
<svg class="a" style="left:632px;top:713.5px" width="10" height="10" viewBox="0 0 10 10"><path d="M0.5 0.5h5l2.5 2.5v6.5h-7.5z" fill="#7fb3e8"/><path d="M4 9l5-5 1 1-5 5z" fill="#f0a030"/></svg>
<div class="a" style="left:355.4px;top:733px;width:252.80px;height:27.00px;background:#fff;border:1px solid #d5d8de;border-radius:3px;box-shadow:0 1px 1.5px rgba(0,0,0,0.06)"></div>
<div class="t" style="left:701.00px;top:223.65px;font-size:10.70px;color:#444;font-weight:bold;">Zeitangaben</div>
<div class="a" style="left:811.4px;top:240px;width:225.20px;height:17.60px;background:#fff;border:1px solid #d5d8de;border-radius:3px;box-shadow:0 1px 1.5px rgba(0,0,0,0.06)"></div>
<div class="t" style="left:746.37px;top:245.08px;font-size:9.00px;color:#444;-webkit-text-stroke:0.08px currentColor;">Bestelldatum:</div>
<div class="t" style="left:816.50px;top:244.85px;font-size:8.80px;color:#333;-webkit-text-stroke:0.08px currentColor;">16-10-2024</div>
<svg class="a" style="left:1039px;top:244px" width="9" height="9" viewBox="0 0 9 9"><rect x="0.3" y="0.8" width="8.4" height="7.9" fill="#d9dadd"/><rect x="0.3" y="0.8" width="8.4" height="2.4" fill="#e0463d"/><path d="M1.5 4.5h6M1.5 6h6M1.5 7.5h6" stroke="#9a9ca2" stroke-width="0.6"/></svg>
<div class="a" style="left:811.4px;top:261px;width:225.20px;height:17.60px;background:#fff;border:1px solid #d5d8de;border-radius:3px;box-shadow:0 1px 1.5px rgba(0,0,0,0.06)"></div>
<div class="t" style="left:742.87px;top:266.08px;font-size:9.00px;color:#444;-webkit-text-stroke:0.08px currentColor;">Anlieferdatum:</div>
<svg class="a" style="left:1039px;top:265px" width="9" height="9" viewBox="0 0 9 9"><rect x="0.3" y="0.8" width="8.4" height="7.9" fill="#d9dadd"/><rect x="0.3" y="0.8" width="8.4" height="2.4" fill="#e0463d"/><path d="M1.5 4.5h6M1.5 6h6M1.5 7.5h6" stroke="#9a9ca2" stroke-width="0.6"/></svg>
<div class="a" style="left:811.4px;top:284px;width:225.20px;height:17.60px;background:#fff;border:1px solid #d5d8de;border-radius:3px;box-shadow:0 1px 1.5px rgba(0,0,0,0.06)"></div>
<div class="t" style="left:739.37px;top:284.38px;font-size:9.00px;color:#444;-webkit-text-stroke:0.08px currentColor;">Referenzdatum</div>
<div class="t" style="left:748.37px;top:293.18px;font-size:9.00px;color:#444;-webkit-text-stroke:0.08px currentColor;">Preisfindung:</div>
<div class="t" style="left:819.50px;top:289.47px;font-size:8.30px;color:#333;-webkit-text-stroke:0.08px currentColor;">Bestelldatum</div>
<svg class="a" style="left:1028px;top:291px" width="7" height="5" viewBox="0 0 7 5"><path d="M0.8 1l2.7 2.7L6.2 1" stroke="#555" stroke-width="1.1" fill="none"/></svg>
<div class="t" style="left:701.70px;top:347.70px;font-size:10.64px;color:#444;font-weight:bold;">Dokument</div>
<svg class="a" style="left:1073.5px;top:348.7px" width="10" height="8" viewBox="0 0 10 8"><rect width="10" height="2.7" fill="#222"/><rect y="2.7" width="10" height="2.7" fill="#dd1f26"/><rect y="5.3" width="10" height="2.7" fill="#f7c600"/></svg>
<div class="a" style="left:811.4px;top:365.6px;width:155.80px;height:17.60px;background:#fff;border:1px solid #d5d8de;border-radius:3px;box-shadow:0 1px 1.5px rgba(0,0,0,0.06)"></div>
<div class="t" style="left:766.89px;top:370.88px;font-size:9.00px;color:#444;-webkit-text-stroke:0.08px currentColor;">Drucker:</div>
<div class="t" style="left:819.50px;top:371.14px;font-size:8.46px;color:#333;-webkit-text-stroke:0.08px currentColor;">lokaler Standarddrucker</div>
<svg class="a" style="left:958.5px;top:372px" width="7" height="5" viewBox="0 0 7 5"><path d="M0.8 1l2.7 2.7L6.2 1" stroke="#555" stroke-width="1.1" fill="none"/></svg>
<div class="a" style="left:811.4px;top:389.3px;width:155.80px;height:17.70px;background:#fff;border:1px solid #d5d8de;border-radius:3px;box-shadow:0 1px 1.5px rgba(0,0,0,0.06)"></div>
<div class="t" style="left:757.38px;top:394.18px;font-size:9.00px;color:#444;-webkit-text-stroke:0.08px currentColor;">Dokument:</div>
<div class="t" style="left:819.50px;top:394.76px;font-size:8.55px;color:#333;-webkit-text-stroke:0.08px currentColor;">Auftragsbestätigung (Kontrakt)</div>
<svg class="a" style="left:958.5px;top:395.5px" width="7" height="5" viewBox="0 0 7 5"><path d="M0.8 1l2.7 2.7L6.2 1" stroke="#555" stroke-width="1.1" fill="none"/></svg>
<svg class="a" style="left:1012px;top:376.5px" width="14" height="18" viewBox="0 0 14 18"><path d="M0 0h9.5l4.5 4.5V18H0z" fill="#6fb1ef"/><path d="M9.5 0v4.5H14z" fill="#b9dbf8"/><path d="M3 8h8M3 10.5h8M3 13h5" stroke="#3d86d6" stroke-width="1.2"/></svg>
<svg class="a" style="left:1057.5px;top:377.5px" width="18" height="17" viewBox="0 0 18 17"><rect x="4" y="0" width="10" height="5" fill="#6fb1ef"/><rect x="0" y="4" width="18" height="9" rx="2" fill="#37474f"/><rect x="4" y="10" width="10" height="7" fill="#6fb1ef"/></svg>
<div class="t" style="left:701.70px;top:453.48px;font-size:10.66px;color:#444;font-weight:bold;">Druckprotokoll</div>
<svg class="a" style="left:1071px;top:453.5px" width="9" height="10" viewBox="0 0 9 10"><path d="M7.6 3.5A3.5 3.5 0 0 0 1.3 4M1.4 6.5A3.5 3.5 0 0 0 7.7 6" stroke="#3a8ee6" stroke-width="1.3" fill="none"/><path d="M7.9 1.3v2.8H5.3zM1.1 8.7V5.9h2.6z" fill="#3a8ee6"/></svg>
<div class="t" style="left:696.30px;top:469.91px;font-size:8.49px;color:#555;-webkit-text-stroke:0.08px currentColor;">Datum</div>
<div class="t" style="left:831.70px;top:469.99px;font-size:8.40px;color:#555;-webkit-text-stroke:0.08px currentColor;">Dokument</div>
<div class="a" style="left:695.2px;top:479px;width:387.10px;height:93.00px;background:#fdfdfd"></div>
<div class="t" style="left:701.30px;top:485.02px;font-size:8.83px;color:#444;-webkit-text-stroke:0.08px currentColor;">21-10-2024 10:03:27</div>
<div class="t" style="left:836.80px;top:485.27px;font-size:8.54px;color:#444;-webkit-text-stroke:0.08px currentColor;">Auftragsbestätigung (Kontrakt)</div>
<svg class="a" style="left:1052.5px;top:485.5px" width="9" height="6" viewBox="0 0 9 6"><rect width="9" height="6" fill="#c3cdd6"/><path d="M0 0.3l4.5 3 4.5-3" stroke="#e8edf2" stroke-width="0.8" fill="none"/></svg>
<div class="t" style="left:701.30px;top:503.32px;font-size:8.83px;color:#444;-webkit-text-stroke:0.08px currentColor;">21-10-2024 09:53:59</div>
<div class="t" style="left:836.80px;top:503.57px;font-size:8.54px;color:#444;-webkit-text-stroke:0.08px currentColor;">Auftragsbestätigung (Kontrakt)</div>
<svg class="a" style="left:1052.5px;top:503.8px" width="9" height="6" viewBox="0 0 9 6"><rect width="9" height="6" fill="#c3cdd6"/><path d="M0 0.3l4.5 3 4.5-3" stroke="#e8edf2" stroke-width="0.8" fill="none"/></svg>
<div class="t" style="left:701.30px;top:521.52px;font-size:8.83px;color:#444;-webkit-text-stroke:0.08px currentColor;">21-10-2024 09:34:37</div>
<div class="t" style="left:836.80px;top:521.77px;font-size:8.54px;color:#444;-webkit-text-stroke:0.08px currentColor;">Auftragsbestätigung (Kontrakt)</div>
<svg class="a" style="left:1052.5px;top:522px" width="9" height="6" viewBox="0 0 9 6"><rect width="9" height="6" fill="#c3cdd6"/><path d="M0 0.3l4.5 3 4.5-3" stroke="#e8edf2" stroke-width="0.8" fill="none"/></svg>
<div class="t" style="left:701.30px;top:540.22px;font-size:8.83px;color:#444;-webkit-text-stroke:0.08px currentColor;">21-10-2024 09:15:29</div>
<div class="t" style="left:836.80px;top:540.47px;font-size:8.54px;color:#444;-webkit-text-stroke:0.08px currentColor;">Auftragsbestätigung (Kontrakt)</div>
<div class="t" style="left:701.30px;top:558.82px;font-size:8.83px;color:#444;-webkit-text-stroke:0.08px currentColor;">21-10-2024 09:03:10</div>
<div class="t" style="left:836.80px;top:559.07px;font-size:8.54px;color:#444;-webkit-text-stroke:0.08px currentColor;">Auftragsbestätigung (Kontrakt)</div>
<svg class="a" style="left:1052.5px;top:559.3px" width="9" height="6" viewBox="0 0 9 6"><rect width="9" height="6" fill="#c3cdd6"/><path d="M0 0.3l4.5 3 4.5-3" stroke="#e8edf2" stroke-width="0.8" fill="none"/></svg>
<div class="t" style="left:1067.00px;top:579.60px;font-size:8.50px;color:#222;font-weight:bold;">1</div>
<div class="t" style="left:1073.50px;top:579.60px;font-size:8.50px;color:#555;-webkit-text-stroke:0.08px currentColor;">2</div>
<div class="t" style="left:701.70px;top:637.12px;font-size:10.60px;color:#444;font-weight:bold;">Faktura</div>
<svg class="a" style="left:1061px;top:637px" width="9" height="10" viewBox="0 0 9 10"><path d="M7.6 3.5A3.5 3.5 0 0 0 1.3 4M1.4 6.5A3.5 3.5 0 0 0 7.7 6" stroke="#3a8ee6" stroke-width="1.3" fill="none"/><path d="M7.9 1.3v2.8H5.3zM1.1 8.7V5.9h2.6z" fill="#3a8ee6"/></svg>
<svg class="a" style="left:1073.5px;top:637.5px" width="10" height="8" viewBox="0 0 10 8"><rect width="10" height="2.7" fill="#222"/><rect y="2.7" width="10" height="2.7" fill="#dd1f26"/><rect y="5.3" width="10" height="2.7" fill="#f7c600"/></svg>
<div class="t" style="left:709.50px;top:653.86px;font-size:8.20px;color:#555;-webkit-text-stroke:0.08px currentColor;">Typ</div>
<div class="t" style="left:757.20px;top:653.86px;font-size:8.20px;color:#555;-webkit-text-stroke:0.08px currentColor;">Lfd. Nr.</div>
<div class="t" style="left:840.50px;top:653.86px;font-size:8.20px;color:#555;-webkit-text-stroke:0.08px currentColor;">Datum</div>
<div class="t" style="left:892.30px;top:653.86px;font-size:8.20px;color:#555;-webkit-text-stroke:0.08px currentColor;">Betrag</div>
<div class="t" style="left:929.60px;top:653.86px;font-size:8.20px;color:#555;-webkit-text-stroke:0.08px currentColor;">Partner</div>
<div class="t" style="left:1073.50px;top:670.73px;font-size:8.00px;color:#222;font-weight:bold;">1</div>
<div class="t" style="left:701.70px;top:726.90px;font-size:10.52px;color:#444;font-weight:bold;">Kontakte</div>
<svg class="a" style="left:1137.5px;top:49.5px" width="9" height="7" viewBox="0 0 9 7"><path d="M0.5 3.5h5.5" stroke="#3aaa35" stroke-width="1.7"/><path d="M5 0.5L8.8 3.5 5 6.5z" fill="#3aaa35"/></svg>
<svg class="a" style="left:1251.5px;top:48.5px" width="9" height="10" viewBox="0 0 9 10"><circle cx="6" cy="2" r="1.7" fill="#6b6fd6"/><circle cx="2.5" cy="5.5" r="2.2" fill="#2f7fd6"/><circle cx="2.5" cy="5.5" r="0.9" fill="#fafafa"/><circle cx="6.8" cy="7.8" r="2" fill="#3aa84a"/></svg>
<div class="a" style="left:1144.3px;top:59px;width:116.50px;height:73.70px;background:#f8f8fa;border:2.6px solid #e312e6;border-radius:4px"></div>
<svg class="a" style="left:1150.5px;top:64px" width="8" height="9" viewBox="0 0 8 9"><circle cx="4" cy="2.6" r="2.2" fill="#f0a860"/><path d="M1.2 2.4c0-1.8 1.2-2.3 2.8-2.3s2.8.5 2.8 2.3c-.8-.7-1.5-.9-2.8-.9s-2 .2-2.8.9z" fill="#7a4a20"/><path d="M0 9c0-2.6 1.6-3.8 4-3.8s4 1.2 4 3.8z" fill="#3a9ee8"/></svg>
<svg class="a" style="left:1150.5px;top:75.5px" width="8" height="7.5" viewBox="0 0 8 7.5"><path d="M6.5 1.2L1.5 3.75 6.5 6.3" stroke="#1d7ad8" stroke-width="1.1" fill="none"/><circle cx="6.5" cy="1.2" r="1.2" fill="#1d7ad8"/><circle cx="1.5" cy="3.75" r="1.3" fill="#1d7ad8"/><circle cx="6.5" cy="6.3" r="1.2" fill="#1d7ad8"/></svg>
<svg class="a" style="left:1150.5px;top:84px" width="9" height="9" viewBox="0 0 9 9"><path d="M0.5 0h5l2 2v7h-7z" fill="#6aaee8"/><path d="M3 7.5l4-4 1 1-4 4z" fill="#5a9a40"/><circle cx="6.5" cy="7" r="1.8" fill="#f5a742"/></svg>
<svg class="a" style="left:1244.5px;top:75px" width="9" height="9" viewBox="0 0 9 9"><circle cx="4.5" cy="4.5" r="4.2" fill="#8cc6f6"/><circle cx="4.5" cy="4.5" r="2.8" fill="none" stroke="#b9dcfa" stroke-width="0.6"/><circle cx="4.5" cy="4.5" r="1.3" fill="#4a9be8"/></svg>
<div class="t" style="left:1168.70px;top:75.84px;font-size:7.87px;color:#555;-webkit-text-stroke:0.08px currentColor;">SID: 5891137 (18)</div>
<div class="t" style="left:1164.40px;top:95.65px;font-size:7.86px;color:#555;-webkit-text-stroke:0.08px currentColor;">16-10-2024 12:49:10</div>
<div class="t" style="left:1176.70px;top:105.12px;font-size:7.18px;color:#555;-webkit-text-stroke:0.08px currentColor;">Claudia Reuter</div>
<div class="t" style="left:1168.40px;top:113.70px;font-size:7.45px;color:#555;-webkit-text-stroke:0.08px currentColor;">VK-Kontrakt Export -</div>
<div class="t" style="left:1158.00px;top:121.58px;font-size:7.34px;color:#555;-webkit-text-stroke:0.08px currentColor;">Vorauszahlung ausstehend</div>
<div class="a" style="left:1037.3px;top:678.2px;width:225.70px;height:29.00px;background:#eef0f4"></div>
<svg class="a" style="left:1042px;top:688px" width="8" height="8" viewBox="0 0 8 8"><circle cx="4" cy="4" r="3.6" fill="#9cc4fa"/><circle cx="4" cy="4" r="2.9" fill="#eaf2fe"/><circle cx="4" cy="4" r="2.1" fill="#1a6ef5"/></svg>
<div class="t" style="left:1052.00px;top:683.76px;font-size:8.67px;color:#333;font-weight:bold;">Vorauszahlung</div>
<div class="t" style="left:1052.00px;top:692.46px;font-size:8.67px;color:#333;font-weight:bold;">eingegangen</div>
<svg class="a" style="left:1234.5px;top:685.5px" width="16" height="15" viewBox="0 0 16 15"><rect x="0" y="9" width="15" height="6" rx="1" fill="#f5b32e"/><path d="M1 1h9.5v9H1z" fill="#5fa6ea"/><path d="M2.5 3.5h5M2.5 5.5h4" stroke="#e6f1fb" stroke-width="0.9"/><path d="M12.5 11V3.5M10 6l2.5-3 2.5 3" stroke="#1d7ad8" stroke-width="1.4" fill="none"/></svg>
<svg class="a" style="left:960px;top:630px" width="90" height="60" viewBox="0 0 90 60"><path d="M18.5 12.3L67 49.5M45 49.3l23.5 0.8M61.7 27.5l6.8 22.6" stroke="#ffe600" stroke-width="6.6" stroke-linecap="round" stroke-linejoin="round" fill="none"/></svg>
<div class="a" style="left:209.7px;top:710.8px;width:74.10px;height:24.40px;background:linear-gradient(#fafbfc,#e1e4e9);border:1px solid #b8bdc6;border-radius:3px;box-shadow:0 1px 1px rgba(0,0,0,0.08)"></div>
<div class="t" style="left:222.75px;top:718.88px;font-size:9.60px;color:#3f4756;-webkit-text-stroke:0.2px #3f4756">Duplizieren</div>
<div class="a" style="left:893px;top:710.8px;width:90.00px;height:24.40px;background:linear-gradient(#1a72d9,#0b55b8);border:1px solid #0a4ea8;border-radius:3px"></div>
<div class="t" style="left:905.90px;top:718.64px;font-size:9.87px;color:#f2f6fc;-webkit-text-stroke:0.08px currentColor;">Speichern [F2]</div>
<div class="a" style="left:989.6px;top:710.8px;width:61.40px;height:24.40px;background:linear-gradient(#fafbfc,#e1e4e9);border:1px solid #b8bdc6;border-radius:3px;box-shadow:0 1px 1px rgba(0,0,0,0.08)"></div>
<div class="t" style="left:1012.05px;top:719.39px;font-size:8.99px;color:#3f4756;-webkit-text-stroke:0.2px #3f4756">Neu</div>
<div class="a" style="left:1057.4px;top:710.8px;width:61.60px;height:24.40px;background:linear-gradient(#fafbfc,#e1e4e9);border:1px solid #b8bdc6;border-radius:3px;box-shadow:0 1px 1px rgba(0,0,0,0.08)"></div>
<div class="t" style="left:1072.45px;top:719.14px;font-size:9.29px;color:#3f4756;-webkit-text-stroke:0.2px #3f4756">Suchen</div>
<div class="a" style="left:1125.3px;top:710.8px;width:61.70px;height:24.40px;background:linear-gradient(#fafbfc,#e1e4e9);border:1px solid #b8bdc6;border-radius:3px;box-shadow:0 1px 1px rgba(0,0,0,0.08)"></div>
<div class="t" style="left:1138.75px;top:719.21px;font-size:9.20px;color:#3f4756;-webkit-text-stroke:0.2px #3f4756">Löschen</div>
<div class="a" style="left:1193px;top:710.8px;width:62.00px;height:24.40px;background:linear-gradient(#fafbfc,#e1e4e9);border:1px solid #b8bdc6;border-radius:3px;box-shadow:0 1px 1px rgba(0,0,0,0.08)"></div>
<div class="t" style="left:1209.25px;top:718.83px;font-size:9.65px;color:#3f4756;-webkit-text-stroke:0.2px #3f4756">Zurück</div>
</body></html>
